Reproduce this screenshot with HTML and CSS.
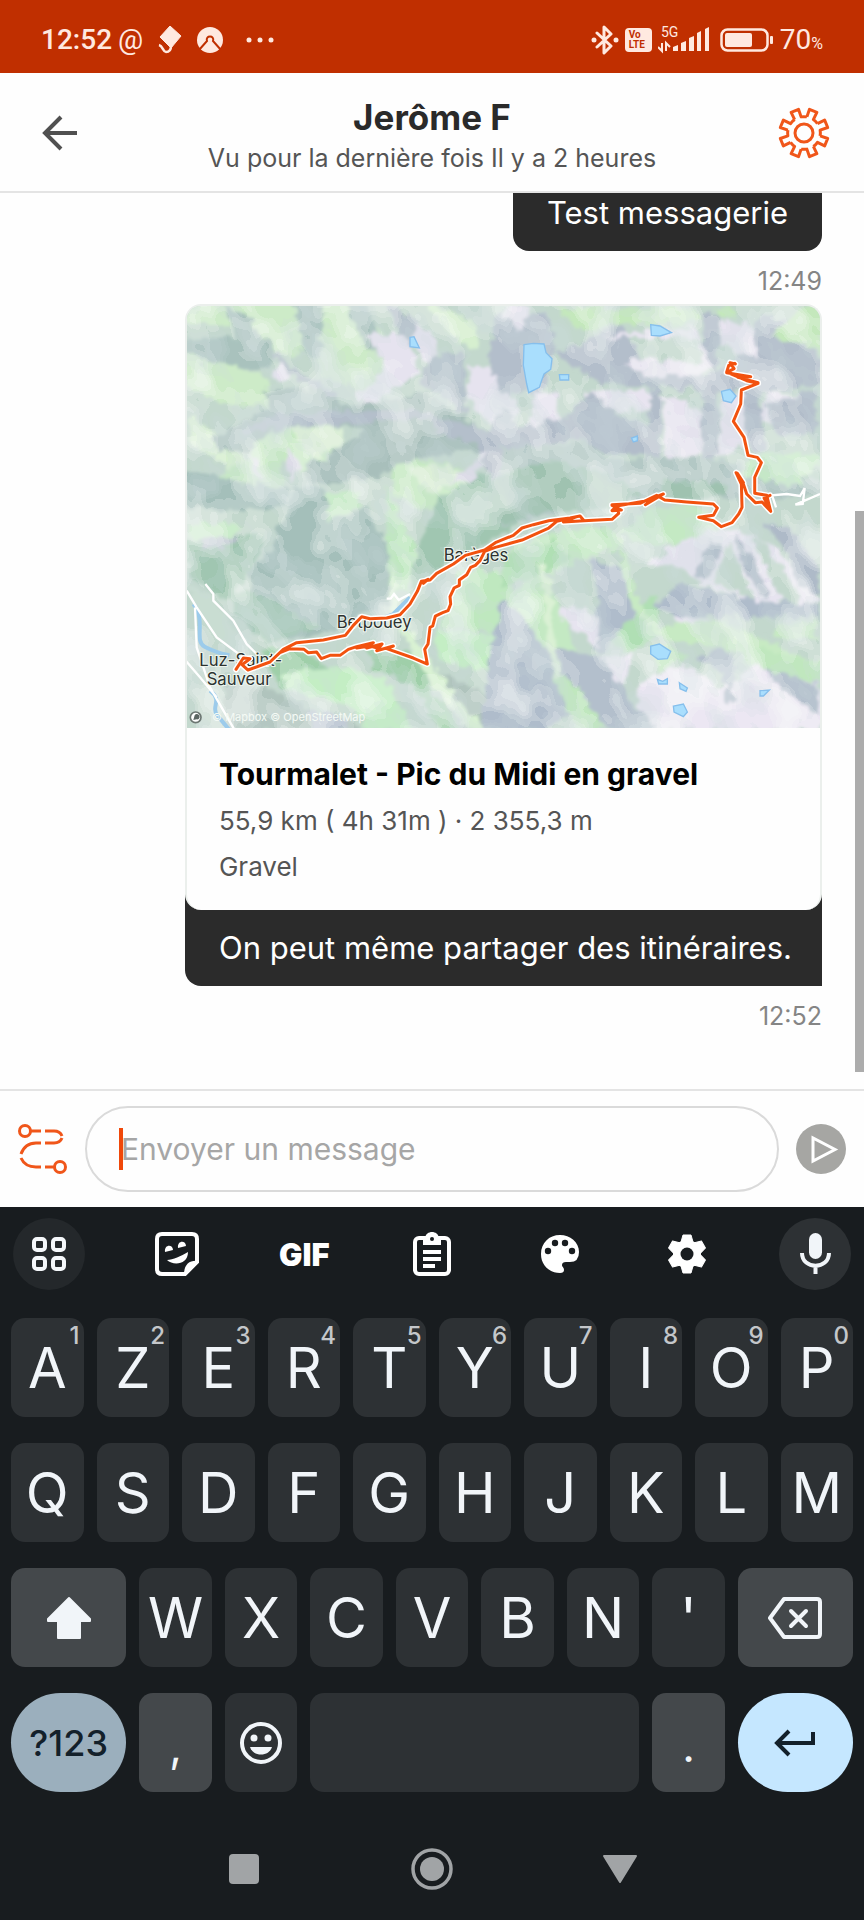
FILE: index.html
```html
<!DOCTYPE html>
<html lang="fr">
<head>
    <meta charset="UTF-8">
    <meta name="viewport" content="width=device-width, initial-scale=1.0">
    <title>Jerôme F</title>
    <link rel="stylesheet" href="styles.css">
</head>
<body>
    <div class="status">
        <div class="status_left">
            <span class="clock">12:52</span>
            <span class="at">@</span>
            <svg width="24" height="28" viewBox="0 0 24 28"><path d="M12 0 23 10 13 22 2 11Z" fill="#ffe9e0" stroke="#ffe9e0" stroke-linejoin="round"/><path d="M13 20C13 24 11 26 8 26S5 20 1 19" fill="none" stroke="#ffe9e0" stroke-width="2.5"/></svg>
            <svg width="26" height="26" viewBox="0 0 26 26"><circle cx="13" cy="13" r="13" fill="#ffe9e0"/><path d="M2 23 10 14C8 8 18 8 16 14L24 23" fill="none" stroke="#c02f00" stroke-width="2"/></svg>
            <svg class="more" width="28" height="6" viewBox="0 0 28 6" fill="#ffe9e0"><circle cx="3" cy="3" r="2.5"/><circle cx="14" cy="3" r="2.5"/><circle cx="25" cy="3" r="2.5"/></svg>
        </div>
        <div class="status_right">
            <svg width="28" height="30" viewBox="0 0 28 30"><path d="M6 8 20 21 13 28V2L20 9 6 22" fill="none" stroke="#ffe9e0" stroke-width="3" stroke-linejoin="round" stroke-linecap="round"/><circle cx="3" cy="15" r="2.5" fill="#ffe9e0"/><circle cx="25" cy="15" r="2.5" fill="#ffe9e0"/></svg>
            <span class="volte"><b>Vo</b><b>LTE</b></span>
            <svg class="signal" width="52" height="39" viewBox="0 -6 52 39"><g fill="#ffe9e0"><text x="3" y="11" font-size="14">5G</text><path d="M15 25V21L20 19V25ZM23 25V17L28 15V25ZM31 25V12L36 10V25ZM39 25V7L43 5V25ZM47 25V3L51 1V25Z"/><path d="M4 17v8L0 21M8 25v-8l4 4" fill="none" stroke="#ffe9e0" stroke-width="2"/></g></svg>
            <svg width="54" height="24" viewBox="0 0 54 24"><rect x="1.5" y="1.5" width="46" height="21" rx="6" fill="none" stroke="#ffe9e0" stroke-width="2.5"/><rect x="5" y="5" width="27" height="14" rx="2" fill="#ffe9e0"/><rect x="50" y="8" width="3" height="8" rx="1" fill="#ffe9e0"/></svg>
            <span class="level">70<small>%</small></span>
        </div>
    </div>

    <header class="header">
        <button class="icon_btn" aria-label="Retour">
            <svg width="36" height="36" viewBox="0 0 36 36" fill="none" stroke="#505050" stroke-width="4"><path d="M35 18H3M19 2 3 18 19 34"/></svg>
        </button>
        <div class="who">
            <h1>Jerôme F</h1>
            <p>Vu pour la dernière fois Il y a 2 heures</p>
        </div>
        <button class="icon_btn" aria-label="Paramètres">
            <svg width="52" height="52" viewBox="-26 -26 52 52" fill="none" stroke="#f0561a" stroke-width="3" stroke-linejoin="round">
                <circle r="9"/>
                <g transform="rotate(22.5)">
                    <path id="tooth" d="M-3.5-16-4-24H4L3.5-16Q6-15.500 8.840-13.790"/>
                    <use href="#tooth" transform="rotate(45)"/>
                    <use href="#tooth" transform="rotate(90)"/>
                    <use href="#tooth" transform="rotate(135)"/>
                    <use href="#tooth" transform="rotate(180)"/>
                    <use href="#tooth" transform="rotate(225)"/>
                    <use href="#tooth" transform="rotate(270)"/>
                    <use href="#tooth" transform="rotate(315)"/>
                </g>
            </svg>
        </button>
    </header>

    <main class="messages">
        <p class="bubble">Test messagerie</p>
        <time class="time">12:49</time>
        <div class="share">
            <article class="card">
                <svg class="map" viewBox="21 36 1899 1266">
                    <defs>
                        <filter id="rough" x="0" y="0" width="100%" height="100%">
                            <feTurbulence type="fractalNoise" baseFrequency="0.035" numOctaves="2" seed="4"/>
                            <feDisplacementMap in="SourceGraphic" scale="40" xChannelSelector="R" yChannelSelector="G"/>
                            <feGaussianBlur stdDeviation="5"/>
                        </filter>
                        <!-- pale and dark relief patches -->
                        <filter id="light" x="0" y="0" width="100%" height="100%">
                            <feTurbulence type="fractalNoise" baseFrequency="0.009 0.006" numOctaves="3" seed="11"/>
                            <feColorMatrix values="0 0 0 0 0.94  0 0 0 0 0.96  0 0 0 0 0.95  2.500 0 0 0 -0.950"/>
                            <feComponentTransfer><feFuncA type="discrete" tableValues="0 .2 .35 .5 .6"/></feComponentTransfer>
                        </filter>
                        <filter id="shade" x="0" y="0" width="100%" height="100%">
                            <feTurbulence type="fractalNoise" baseFrequency="0.010 0.006" numOctaves="3" seed="27"/>
                            <feColorMatrix values="0 0 0 0 0.600  0 0 0 0 0.700  0 0 0 0 0.720  2.500 0 0 0 -1"/>
                            <feComponentTransfer><feFuncA type="discrete" tableValues="0 .15 .25 .35 .4"/></feComponentTransfer>
                        </filter>
                        <path id="track" d="M168 1126 190 1092 210 1094 186 1112 204 1128 270 1104 310 1066 350 1046 430 1038 496 1024 520 994 545 968 570 974 620 972 660 962 690 930 712 892 724 862 750 858 770 838 820 810 856 784 914 768 946 746 1000 724 1026 702 1060 692 1106 680 1170 672 1200 666 1212 680 1296 676 1316 658 1312 640 1296 632 1380 628 1430 604 1454 618 1520 624 1600 630 1612 642 1600 664 1556 670 1600 680 1624 698 1656 686 1676 660 1686 640 1684 570 1668 536 1690 570 1700 600 1726 626 1746 624 1772 652 1760 604 1724 598 1724 550 1744 506 1732 490 1704 484 1692 430 1660 382 1682 330 1684 288 1734 268 1700 260 1640 234 1646 214 1664 208M1666 210 1650 206 1662 224 1640 236 1712 248 1674 250 1734 266M1770 604 1752 612 1770 648M1672 538 1690 566M1296 634 1324 648 1296 650 1310 636 1400 620 1450 600 1396 632M1212 680 1150 684 1190 668 1130 682 1106 702 1026 738 946 760 914 772 900 800 886 814 872 820 860 842 838 858 838 874 822 882 810 908 812 930 804 950 788 956 766 966 758 996 750 1000 744 1050 734 1066 742 1110 700 1092 620 1064 640 1056 590 1070 606 1050 560 1062 580 1046 530 1058 505 1066 480 1084 450 1084 424 1094 410 1074 385 1076 372 1066 330 1064 300 1076M530 1058 560 1052 530 1062 570 1056 600 1064M724 866 744 856 730 868"/>
                    </defs>
                    <rect x="21" y="36" width="1899" height="1266" fill="#c3d8cd"/>
                    <g filter="url(#rough)">
                        <!-- west side -->
                        <path fill="#cdebc8" d="M0 20H340L400 130 350 190 250 170 150 90 0 90ZM0 180 120 200 260 250 280 340 120 330 0 260ZM370 30 500 20 560 180 500 280 420 240ZM540 60 660 160 700 220 560 310 500 260Z"/>
                        <path fill="#a9c2bd" d="M0 140 160 130 290 200 240 230 100 210 0 170ZM130 40 200 60 290 180 260 200 170 130ZM340 20 430 20 420 200 370 170ZM490 20 560 30 620 190 560 160Z"/>
                        <path fill="#b4c0ca" d="M280 170 380 250 470 300 460 350 380 280 300 220ZM620 20 720 80 690 180 650 100ZM760 180 850 180 860 370 780 300 720 270Z"/>
                        <path fill="#e6e3ef" d="M560 120 680 120 720 240 640 280 560 340 530 300 620 230ZM700 90 770 120 770 190 740 220 700 150ZM290 200 330 240 310 270 280 250ZM470 370 560 320 620 300 560 350ZM870 210 930 220 1020 340 990 410 930 390 860 320Z"/>
                        <path fill="#d6efcf" d="M740 20 880 80 900 160 840 150 770 70ZM30 370 130 440 200 500 150 530 30 440Z"/>
                        <path fill="#a8bfbb" d="M250 290 420 280 500 340 640 320 740 290 790 330 900 400 1020 430V500L860 470 700 500 560 560 400 570 360 520 460 480 560 410 470 390 300 400 210 470 120 470 90 440 200 380 280 340Z"/>
                        <path fill="#b4bfcb" d="M380 350 560 350 740 350 780 370 600 380 500 390 280 400 180 430 210 390 290 360ZM740 370 900 400 1020 430 900 450 780 420Z"/>
                        <path fill="#c6e9c2" d="M220 440 330 400 480 400 480 460 360 530 300 500 310 580 180 590 100 560 140 520 210 500ZM640 510 800 500 870 560 800 610 730 650 640 600Z"/>
                        <path fill="#dcefd7" d="M330 400 480 400 500 440 400 500 380 470ZM680 520 810 510 850 550 750 600Z"/>
                        <path fill="#dddce8" d="M210 470 240 520 250 570 230 560ZM320 460 360 510 330 570ZM800 560 880 510 910 450 1020 460 920 500 880 560Z"/>
                        <path fill="#a4bfba" d="M340 580 440 590 470 680 560 640 640 800 620 930 440 1010 330 1040 230 950 210 830 280 760 290 700 330 660ZM0 520 160 560 330 590 320 640 160 650 0 640Z"/>
                        <path fill="#a0c6b1" d="M770 620 900 540 1020 520V690L920 750 790 820 700 900 690 830ZM0 740 260 720 210 840 130 920 40 850ZM120 880 240 900 420 1000 260 1050 170 960Z"/>
                        <path fill="#b9c1cd" d="M900 500 960 430 1030 470V560L950 560ZM60 730 180 730 150 760 80 760Z"/>
                        <path fill="#bfe8bf" d="M20 690 190 690 160 730 30 730ZM620 570 670 700 710 760 680 900 630 870 620 760ZM830 830 940 830 1030 920V1030L900 1010 780 1000 830 880ZM440 600 540 590 540 640 450 680Z"/>
                        <path fill="#9fcfa9" d="M560 1040 720 1080 760 1200 880 1310H780L690 1170 580 1120ZM240 1060 340 1060 470 1130 440 1200 300 1180Z"/>
                        <path fill="#c4eec4" d="M300 1140 500 1120 620 1160 700 1310H560L520 1240 330 1190ZM760 1010 960 1020 1030 1130V1210L920 1130 780 1100Z"/>
                        <path fill="#b0c4bd" d="M740 1120 860 1170 1020 1290V1310H840ZM130 1160 260 1180 400 1250 540 1290 540 1310H130Z"/>
                        <path fill="#b5bfce" d="M960 1090 1030 1100V1240L960 1150ZM380 1250 480 1260 500 1310H400Z"/>
                        <path fill="#d9f2d3" d="M640 800 660 960 760 1120 850 1240 920 1310H870L770 1190 690 1060 630 940Z"/>
                        <path fill="#c9ddd2" d="M20 870 90 900 210 1060 170 1100 60 980Z"/>
                        <!-- east side -->
                        <g transform="translate(1026)">
                            <path fill="#b3becb" d="M-80 60H80L100 160 60 300 -60 300-100 200ZM100 180 300 90 360 200 560 240 640 200 720 60 820 90 900 200V260L740 300 640 290 400 280 240 270ZM540 60 600 60 580 230 550 200Z"/>
                            <path fill="#c4e8bc" d="M100 40 260 40 500 40 540 70 480 90 300 90 180 110ZM580 40 650 50 640 70 600 70ZM750 130 830 40 900 40V170L820 150Z"/>
                            <path fill="#e8e4f0" d="M20 40 -40 30-60 60 0 110ZM240 130 360 110 520 100 570 210 540 240 380 250 310 210 360 190 540 210 530 130ZM600 80 700 90 700 200 640 170 590 160ZM40 290 100 290 120 400 60 430 20 420ZM180 290 390 290 380 350 220 350ZM420 310 470 310 540 360 540 480 430 500ZM600 300 690 300 700 420 640 480 580 480ZM740 300 860 300 760 380 700 380Z"/>
                            <path fill="#b2bdca" d="M140 370 200 290 300 370 400 400V480H260L160 440-140 480-60 340 0 400ZM540 280 590 280 580 500 540 500ZM660 280 710 280 730 480 680 460ZM390 270 420 300 410 490 370 490ZM730 330 880 290 880 420 760 420Z"/>
                            <path fill="#b3c8c5" d="M-60 460 200 450 260 500 400 490 560 490 680 520 900 530V600L700 620 400 610 180 640-80 700Z"/>
                            <path fill="#9fc2b0" d="M-100 560 60 500 240 530 360 600 260 650 100 650-100 700ZM740 530 900 530V560L760 560ZM420 560 620 570 600 610 420 610Z"/>
                            <path fill="#c4e9c3" d="M-40 760 120 710 270 700 300 760 180 790 110 830 0 840ZM380 640 540 640 600 700 500 740 380 760 300 720ZM640 540 820 580 900 500V480H720ZM-60 920 60 820 110 940 200 1170 140 1240 60 1100Z"/>
                            <path fill="#b0dfb4" d="M-60 780 90 740 150 790 60 840-60 880ZM400 900 350 950 250 1040 330 1080 420 1010Z"/>
                            <path fill="#afbccb" d="M200 800 300 820 340 950 240 1080 210 1060 230 900ZM400 940 480 860 640 910 890 930V970L560 970 480 980ZM-60 920 0 960 90 1100 150 1260 60 1310H-120L-100 1100Z"/>
                            <path fill="#e7e4f0" d="M370 810 480 740 620 700 760 760 900 920 840 930 800 850 700 720 690 740 780 920 700 920 640 780 620 740 580 860 680 920 560 880 480 820ZM800 740 860 780 850 820 800 780ZM110 930 230 960 230 1060 120 980ZM440 960 560 980 480 1000Z"/>
                            <path fill="#aebac8" d="M560 740 600 760 560 860 520 840ZM640 720 690 790 740 900 720 910 660 810ZM720 680 800 780 830 870 890 900V820L800 700Z"/>
                            <path fill="#c7eac3" d="M290 690 340 900 400 1000 600 980 890 1110V1160L800 1120 600 1060 440 1040 340 960 300 840ZM760 990 880 980V1040L760 1030Z"/>
                            <path fill="#ece7f3" d="M360 1160 480 1110 600 1180 720 1100 900 1180V1310H380L340 1210ZM240 1090 330 1080 320 1140 280 1190Z"/>
                            <path fill="#b3bfcc" d="M600 1070 640 1090 630 1230 610 1220ZM700 1080 890 1180V1260L780 1190 720 1110ZM60 1060 240 1090 330 1230 400 1290 390 1310H180L130 1190ZM520 1090 620 1060 610 1140Z"/>
                            <path fill="#c0e7be" d="M640 1040 900 1110V1170L820 1150 680 1110ZM100 1130 180 1190 250 1310H170L110 1190ZM380 1060 440 1050 500 1090 420 1130Z"/>
                            <path fill="#daf1d4" d="M40 800 90 860 90 1010 120 1130 100 1150 70 1010 60 860Z"/>
                        </g>
                    </g>
                    <g transform="rotate(-30 970 670)">
                        <rect x="-300" y="-400" width="2540" height="2140" filter="url(#light)"/>
                        <rect x="-300" y="-400" width="2540" height="2140" filter="url(#shade)"/>
                    </g>
                    <!-- lakes and rivers -->
                    <g fill="#a9defd" stroke="#86bfec" stroke-width="4">
                        <path d="M690 130 702 128 718 162 690 158ZM1032 152 1060 148 1092 150 1098 176 1116 194 1112 226 1092 240 1084 262 1078 280 1046 296 1040 270 1030 214ZM1412 92 1440 96 1474 116 1440 126 1414 124ZM1138 242H1166V258H1140ZM1624 292 1650 286 1668 306 1654 326 1630 320ZM1354 432 1372 426V440L1360 444ZM1412 1056 1438 1050 1472 1072 1462 1094 1434 1096 1412 1080ZM1432 1156 1448 1162 1462 1154V1170H1436ZM1498 1166 1522 1182 1518 1192 1500 1184ZM1480 1236 1510 1230 1522 1254 1510 1268 1482 1254ZM1740 1190 1768 1188 1750 1206 1740 1206Z"/>
                    </g>
                    <path d="M40 930C80 980 40 1040 74 1058S130 1080 148 1084M90 1190C130 1220 90 1240 112 1264L150 1310M690 910 640 960 590 980" fill="none" stroke="#9ccbeb" stroke-width="12"/>
                    <path d="M20 890 50 940 110 1030 190 1090M45 940 50 1060 90 1180 165 1310M0 1080 60 1150 110 1210M76 870 100 900 100 920 160 980 200 1050 230 1080M690 900 656 918 642 900 632 914 620 914M1788 640 1776 604 1820 600 1860 606 1874 582 1868 630 1846 632 1920 600" fill="none" stroke="#fff" stroke-width="7"/>
                    <g class="place">
                        <text x="58" y="1116">Luz-Saint-</text>
                        <text x="80" y="1174">Sauveur</text>
                        <text x="470" y="1003">Betpouey</text>
                        <text x="791" y="802">Barèges</text>
                    </g>
                    <use href="#track" class="halo"/>
                    <use href="#track" class="line"/>
                    <circle cx="47" cy="1270" r="16" fill="#fff" stroke="#6c7672" stroke-width="5"/>
                    <path d="M40 1278 44 1264A8 8 0 1 1 50 1276Z" fill="#5c6663"/>
                    <text class="credit" x="96" y="1281">© Mapbox © OpenStreetMap</text>
                </svg>
                <div class="info">
                    <h2>Tourmalet - Pic du Midi en gravel</h2>
                    <p>55,9 km ( 4h 31m ) · 2 355,3 m</p>
                    <p>Gravel</p>
                </div>
            </article>
            <p class="caption">On peut même partager des itinéraires.</p>
        </div>
        <time class="time">12:52</time>
        <div class="scroll"></div>
    </main>

    <form class="composer">
        <button type="button" aria-label="Partager un itinéraire">
            <svg width="50" height="52" viewBox="0 0 50 52" fill="none" stroke="#f0561a" stroke-width="3">
                <circle cx="7" cy="8" r="5.5"/><circle cx="42" cy="44" r="5.5"/>
                <path d="M13 8H23M27 8H36Q42 8 44 13M44 15Q42 20 36 20H27M23 20H18Q7 20 3 31M3 35Q7 44 18 44H23M27 44H36"/>
            </svg>
        </button>
        <div class="field">
            <input type="text" placeholder="Envoyer un message" aria-label="Envoyer un message">
            <span class="caret"></span>
        </div>
        <button type="submit" aria-label="Envoyer">
            <svg width="50" height="50" viewBox="0 0 50 50"><circle cx="25" cy="25" r="25" fill="#a6a6a3"/><path d="M17 14V37L39 25.5Z" fill="none" stroke="#fff" stroke-width="3"/></svg>
        </button>
    </form>

    <section class="keyboard">
        <div class="tools">
            <button class="round dim" aria-label="Menu"><svg width="36" height="36" viewBox="0 0 36 36" fill="none" stroke="#f5f8fb" stroke-width="4"><rect x="3" y="3" width="11" height="11" rx="3"/><rect x="22" y="3" width="11" height="11" rx="3"/><rect x="3" y="22" width="11" height="11" rx="3"/><rect x="22" y="22" width="11" height="11" rx="3"/></svg></button>
            <button class="round" aria-label="Autocollants"><svg width="44" height="44" viewBox="0 0 44 44"><path d="M7 2H37Q42 2 42 7V30L30 42H7Q2 42 2 37V7Q2 2 7 2Z" fill="none" stroke="#fff" stroke-width="4"/><path d="M43 29C34 28 29 33 29 43H31L43 31ZM12 28C18 28 26 24 33 20 33 33 18 34 12 28Z" fill="#fff"/><path d="M10 20C9 12 18 12 18 18ZM23 16C22 8 31 8 31 14Z" fill="#fff"/></svg></button>
            <button class="round gif">GIF</button>
            <button class="round" aria-label="Presse-papiers"><svg width="38" height="44" viewBox="0 0 38 44"><rect x="2" y="6" width="34" height="36" rx="4" fill="none" stroke="#fff" stroke-width="4"/><path d="M10 6H12C13-2 25-2 26 6H28V13H10Z" fill="#fff"/><circle cx="19" cy="7" r="2" fill="#181c1f"/><path d="M10 20H28M10 27H28M10 34H22" stroke="#fff" stroke-width="4"/></svg></button>
            <button class="round" aria-label="Thèmes"><svg width="40" height="40" viewBox="0 0 40 40"><path d="M20 1C9 1 1 9 1 20S9 39 20 39Q24 39 24 36C24 33 22 33 22 31Q22 28 26 28H30Q39 28 39 18C39 8 30 1 20 1Z" fill="#fff"/><g fill="#181c1f"><circle cx="8" cy="17" r="3.2"/><circle cx="15" cy="9" r="3.2"/><circle cx="25" cy="9" r="3.2"/><circle cx="32" cy="17" r="3.2"/></g></svg></button>
            <button class="round" aria-label="Réglages"><svg width="40" height="40" viewBox="-20 -20 40 40"><g fill="#fff"><circle r="14"/><path id="cog" d="M-6-12-4-19H4L6-12V12L4 19H-4L-6 12Z" stroke="#fff" stroke-linejoin="round"/><use href="#cog" transform="rotate(60)"/><use href="#cog" transform="rotate(120)"/></g><circle r="6.5" fill="#181c1f"/></svg></button>
            <button class="round lit" aria-label="Dictée"><svg width="32" height="42" viewBox="0 0 32 42"><rect x="10" y="0" width="13" height="26" rx="6.5" fill="#f1f5f9"/><path d="M3 20C3 37 30 37 30 20M16.5 33V41" fill="none" stroke="#f1f5f9" stroke-width="4"/></svg></button>
        </div>
        <div class="row">
            <button class="key">A<sup>1</sup></button>
            <button class="key">Z<sup>2</sup></button>
            <button class="key">E<sup>3</sup></button>
            <button class="key">R<sup>4</sup></button>
            <button class="key">T<sup>5</sup></button>
            <button class="key">Y<sup>6</sup></button>
            <button class="key">U<sup>7</sup></button>
            <button class="key">I<sup>8</sup></button>
            <button class="key">O<sup>9</sup></button>
            <button class="key">P<sup>0</sup></button>
        </div>
        <div class="row">
            <button class="key">Q</button>
            <button class="key">S</button>
            <button class="key">D</button>
            <button class="key">F</button>
            <button class="key">G</button>
            <button class="key">H</button>
            <button class="key">J</button>
            <button class="key">K</button>
            <button class="key">L</button>
            <button class="key">M</button>
        </div>
        <div class="row">
            <button class="key wide light" aria-label="Majuscule"><svg width="46" height="44" viewBox="0 0 46 44"><path d="M23 2 44 23V25H34V42H12V25H2V23Z" fill="#f1f5f9" stroke="#f1f5f9" stroke-width="2" stroke-linejoin="round"/></svg></button>
            <button class="key">W</button>
            <button class="key">X</button>
            <button class="key">C</button>
            <button class="key">V</button>
            <button class="key">B</button>
            <button class="key">N</button>
            <button class="key">'</button>
            <button class="key wide light" aria-label="Effacer"><svg width="54" height="42" viewBox="0 0 54 42" fill="none" stroke="#f1f5f9" stroke-width="4" stroke-linecap="round" stroke-linejoin="round"><path d="M16 2H49Q52 2 52 5V37Q52 40 49 40H16L2 21Z"/><path d="M23 14 38 29M38 14 23 29"/></svg></button>
        </div>
        <div class="row">
            <button class="key wide pill num">?123</button>
            <button class="key light mark">,</button>
            <button class="key" aria-label="Emoji"><svg width="44" height="44" viewBox="0 0 44 44"><circle cx="22" cy="22" r="19" fill="none" stroke="#f1f5f9" stroke-width="4"/><circle cx="15" cy="17" r="3.5" fill="#f1f5f9"/><circle cx="29" cy="17" r="3.5" fill="#f1f5f9"/><path d="M11 26H33C30 36 14 36 11 26Z" fill="#f1f5f9"/></svg></button>
            <button class="key space" aria-label="Espace"></button>
            <button class="key light mark">.</button>
            <button class="key wide pill enter" aria-label="Entrée"><svg width="42" height="28" viewBox="0 0 42 28" fill="none" stroke="#13202a" stroke-width="4"><path d="M39 3V14H3M15 2 3 14 15 26"/></svg></button>
        </div>
        <nav class="nav">
            <button aria-label="Applications récentes"><svg width="30" height="30" viewBox="0 0 30 30"><rect width="30" height="30" rx="4" fill="#a1a4a6"/></svg></button>
            <button aria-label="Accueil"><svg width="42" height="42" viewBox="0 0 42 42"><circle cx="21" cy="21" r="19" fill="none" stroke="#a1a4a6" stroke-width="3.5"/><circle cx="21" cy="21" r="12" fill="#a1a4a6"/></svg></button>
            <button aria-label="Précédent"><svg width="36" height="30" viewBox="0 0 36 30"><path d="M2 2H34L18 28Z" fill="#a1a4a6" stroke="#a1a4a6" stroke-width="2" stroke-linejoin="round"/></svg></button>
        </nav>
    </section>
</body>
</html>
```

FILE: styles.css
```css
*{
    margin: 0;
    padding: 0;
    box-sizing: border-box;
}
body{
    display: flex;
    flex-direction: column;
    height: 100vh;
    background-color: #fefefe;
    font-family: Inter, "Liberation Sans", sans-serif;
}
button{
    border: 0;
    background: none;
    font-family: inherit;
    display: flex;
    justify-content: center;
    align-items: center;
}
svg{
    display: block;
}

/* status bar */
.status{
    height: 73px;
    padding: 6px 41px 0;
    display: flex;
    flex-shrink: 0;
    justify-content: space-between;
    align-items: center;
    background-color: #c02f00;
    color: #ffe9e0;
    font-family: Roboto, sans-serif;
    font-size: 28px;
}
.status_left{
    display: flex;
    align-items: center;
}
.clock{
    font-weight: 500;
    margin-right: 6px;
}
.at{
    font-size: 28px;
    margin-right: 15px;
}
.status_left svg{
    margin-right: 15px;
}
.status_left .more{
    margin-left: 8px;
}
.status_right{
    display: flex;
    align-items: center;
    gap: 6px;
}
.volte{
    width: 27px;
    height: 24px;
    border-radius: 4px;
    background-color: #ffe9e0;
    color: #c02f00;
    font-size: 10px;
    line-height: 10px;
    padding: 2px 4px;
}
.volte b{
    display: block;
}
.signal{
    margin-right: 4px;
}
.level small{
    font-size: 16px;
}

/* header */
.header{
    height: 120px;
    flex-shrink: 0;
    display: flex;
    align-items: center;
    padding: 2px 34px 0;
    border-bottom: 2px solid #e4e4e4;
}
.icon_btn{
    width: 52px;
    height: 52px;
}
.who{
    flex: 1;
    padding-top: 4px;
    text-align: center;
}
.who h1{
    font-size: 35px;
    line-height: 42px;
    color: #2a2a2a;
}
.who p{
    margin-top: 4px;
    font-size: 25px;
    line-height: 32px;
    color: #555;
}

/* messages */
.messages{
    flex: 1;
    min-height: 0;
    position: relative;
    overflow: hidden;
    display: flex;
    flex-direction: column;
    justify-content: flex-end;
    align-items: flex-end;
    padding: 0 42px 58px 0;
}
.bubble,
.caption{
    background-color: #2b2b2b;
    color: #fff;
    font-size: 31px;
    line-height: 36px;
    padding: 20px 34px;
}
.bubble{
    border-radius: 16px;
}
.time{
    margin-top: 15px;
    font-size: 25px;
    line-height: 30px;
    color: #858585;
}
.share{
    width: 77.5%;
    margin-top: 8px;
}
.card{
    position: relative;
    overflow: hidden;
    border: 2px solid #ebefec;
    border-bottom: 0;
    border-radius: 16px;
    background-color: #fefefe;
}
.map{
    width: 100%;
    height: auto;
}
.place{
    font-size: 50px;
    fill: #2c3230;
    stroke: #eef5ee;
    stroke-width: 6px;
    paint-order: stroke;
}
.halo,
.line{
    fill: none;
    stroke: #fff;
    stroke-width: 18px;
    stroke-linejoin: round;
    stroke-linecap: round;
}
.line{
    stroke: #f2520f;
    stroke-width: 9px;
}
.credit{
    font-size: 33px;
    fill: #f4faf5;
}
.info{
    padding: 24px 32px 20px;
}
.info h2{
    font-size: 30px;
    line-height: 44px;
    margin-bottom: 2px;
    color: #000;
}
.info p{
    font-size: 26px;
    line-height: 46px;
    color: #555;
}
.caption{
    margin-top: -16px;
    padding-top: 36px;
    border-radius: 0 0 0 16px;
    white-space: nowrap;
}
.scroll{
    position: absolute;
    right: 0;
    top: 35.5%;
    width: 9px;
    height: 62.6%;
    background-color: #acacac;
}

/* composer */
.composer{
    flex-shrink: 0;
    display: flex;
    align-items: center;
    gap: 17px;
    padding: 15px 18px;
    border-top: 2px solid #e4e4e4;
}
.field{
    flex: 1;
    position: relative;
}
.field input{
    display: block;
    width: 100%;
    height: 86px;
    padding: 0 34px;
    border: 2px solid #dadada;
    border-radius: 43px;
    background: none;
    font-family: inherit;
    font-size: 30px;
    outline: none;
}
.field input::placeholder{
    color: #a6a6a6;
    opacity: 1;
}
.caret{
    position: absolute;
    left: 34px;
    top: 22px;
    width: 4px;
    height: 42px;
    background-color: #f0480a;
}

/* keyboard */
.keyboard{
    flex-shrink: 0;
    display: flex;
    flex-direction: column;
    gap: 26px;
    padding: 11px 11px 30px;
    background-color: #181c1f;
}
.tools{
    display: flex;
    justify-content: space-between;
    align-items: center;
    height: 74px;
    padding: 0 2px 2px;
}
.round{
    width: 72px;
    height: 72px;
    border-radius: 50%;
}
.dim{
    background-color: #24282b;
}
.lit{
    background-color: #2d3134;
}
.gif{
    color: #fff;
    font-size: 31px;
    font-weight: 900;
}
.row{
    display: flex;
    gap: 13px;
}
.key{
    flex: 0 0 calc((100% - 117px) / 10);
    height: 99px;
    position: relative;
    border-radius: 14px;
    background-color: #2d3134;
    color: #f1f5f9;
    font-size: 56px;
    line-height: 56px;
}
.key sup{
    position: absolute;
    top: 6px;
    right: 4px;
    font-size: 24px;
    line-height: 24px;
    font-weight: 500;
    color: #c4c7ca;
}
.wide{
    flex: 1;
}
.light{
    background-color: #44484b;
}
.mark{
    padding-top: 6px;
    font-size: 44px;
}
.space{
    flex-basis: calc((100% - 117px) / 10 * 4 + 39px);
}
.pill{
    border-radius: 50px;
}
.num{
    background-color: #9bafbd;
    color: #13202a;
    font-size: 36px;
    font-weight: 500;
}
.enter{
    background-color: #c5e7ff;
}
.nav{
    display: flex;
    justify-content: center;
    padding-top: 30px;
}
.nav button{
    width: 188px;
    height: 42px;
}
```
